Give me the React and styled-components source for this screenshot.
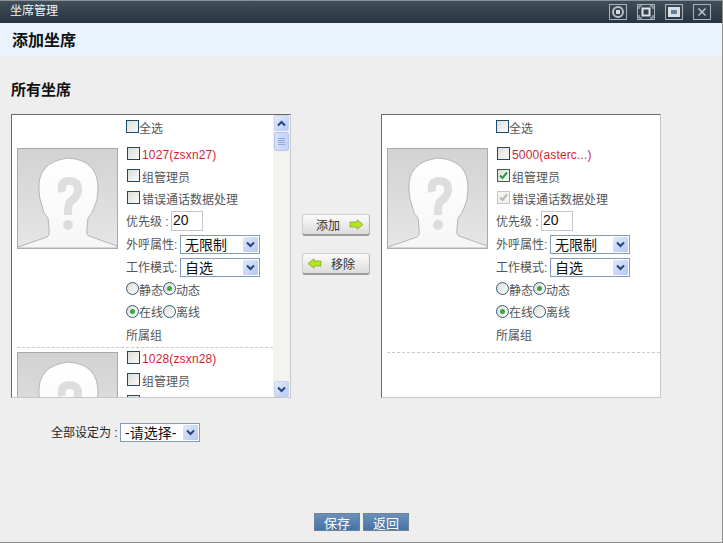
import React from 'react';
import styled, { createGlobalStyle } from 'styled-components';

const Global = createGlobalStyle`
  html, body { margin: 0; padding: 0; background: #eeeeee; }
  body { font-family: "Liberation Sans", "Noto Sans CJK SC", sans-serif; font-size: 12px; color: #555; }
`;

const Page = styled.div`
  width: 723px; height: 543px; box-sizing: border-box; display: flex; flex-direction: column;
  background: #eeeeee; border-right: 1px solid #8d8d8d; border-bottom: 1px solid #8d8d8d; overflow: hidden;
`;
const TitleBar = styled.div`
  height: 23px; flex: none; box-sizing: border-box; display: flex; align-items: center; justify-content: space-between;
  padding: 0 11px 0 10px; color: #f2f5f7; font-size: 12px; border-top: 1px solid #8b9297;
  background: linear-gradient(#3f4e58, #28353e);
`;
const TitleText = styled.span`padding-bottom: 5px;`;
const WinIcons = styled.div`display: flex; gap: 10px;`;
const WinBtn = styled.svg`width: 18px; height: 16px; display: block; border: 1px solid #a6b3bc; box-sizing: border-box;`;
const SubHeader = styled.div`
  height: 33px; flex: none; box-sizing: border-box; display: flex; align-items: center; padding: 0 0 2px 12px;
  background: #e8f3fe; color: #111; font-size: 16px; font-weight: 700;
`;
const Content = styled.div`flex: 1; display: flex; flex-direction: column; padding: 0 0 10px 11px; min-height: 0;`;
const SectionTitle = styled.div`
  height: 22px; margin-top: 21px; display: flex; align-items: center; color: #111; font-size: 15px; font-weight: 700;
`;
const Columns = styled.div`display: flex; margin-top: 15px; height: 284px;`;
const Panel = styled.div`
  width: 280px; height: 284px; box-sizing: border-box; background: #fff; display: flex; flex: none;
  border-top: 1px solid #6a6a6a; border-left: 1px solid #6a6a6a; border-right: 1px solid #c8c8c8; border-bottom: 1px solid #c8c8c8;
`;
const List = styled.div`flex: 1; min-width: 0; overflow: hidden;`;
const SelectAll = styled.div`
  height: 22px; box-sizing: border-box; padding-bottom: 2px; margin: 2px 0 5px 114px; display: flex; align-items: center;
`;
const Card = styled.div`
  margin-left: 5px; display: flex; padding-bottom: ${p => p.$pad}px; border-bottom: 1px dashed #c9c9c9;
`;
const Photo = styled.svg`width: 101px; height: 101px; margin-top: 4px; flex: none; display: block;`;
const Fields = styled.div`margin-left: 8px; display: flex; flex-direction: column; flex: 1; white-space: nowrap;`;
const Row = styled.div`height: ${p => p.$h}px; box-sizing: border-box; padding-bottom: 2px; display: flex; align-items: center;`;
const CheckRow = styled(Row)`padding-left: 1px;`;
const FieldLabel = styled.span`width: 54px; flex: none;`;
const ShortLabel = styled.span`width: 45px; flex: none;`;
const Name = styled.span`color: #cf1f34; margin: 2px 0 0 2px; letter-spacing: .15px;`;
const Lab = styled.span`margin-left: 2px;`;
const NumInput = styled.div`
  width: 32px; height: 20px; box-sizing: border-box; border: 1px solid #c6c6c6; background: #fff; color: #111;
  font-size: 14px; line-height: 17px; padding-left: 1px; margin-top: 1px;
`;
const Box = styled.span`
  width: 13px; height: 13px; flex: none; box-sizing: border-box; display: inline-block; position: relative; margin-bottom: 1px;
  border: 1px solid ${p => (p.$disabled ? '#c6c6c2' : p.$dotted ? '#3e5f42' : '#1d4a6b')};
  background: ${p => p.$disabled ? '#f2f2ee' : 'linear-gradient(135deg, #dcdcd7, #fafaf8)'};
  svg { position: absolute; left: 1px; top: 1px; width: 9px; height: 9px; display: block; }
`;
const Radio = styled.span`
  width: 13px; height: 13px; flex: none; box-sizing: border-box; display: inline-flex; align-items: center; justify-content: center; margin-bottom: 1px;
  border: 1px solid #2f5a7c; border-radius: 50%; background: linear-gradient(135deg, #dcdcd7, #fff);
  &::after { content: ""; width: 5px; height: 5px; border-radius: 50%; background: ${p => p.$on ? '#3aa840' : 'transparent'}; }
`;
const SelectBox = styled.div`
  width: ${p => p.$w}px; height: 19px; box-sizing: border-box; border: 1px solid #7f9db9; background: #fff; flex: none; margin-top: 2px;
  display: flex; align-items: center; justify-content: space-between; padding: 0 1px 0 4px; color: #111; font-size: 14px;
  span:first-child { line-height: 15px; height: 15px; margin-top: 1px; }
`;
const Arrow = styled.span`
  width: 15px; height: 15px; display: flex; align-items: center; justify-content: center; border-radius: 1px;
  background: linear-gradient(135deg, #dfe8fb, #b5c8f3);
  svg { width: 9px; height: 7px; display: block; }
`;
const Scrollbar = styled.div`
  width: 17px; flex: none; background: #f4f4ef; display: flex; flex-direction: column; justify-content: space-between;
`;
const ScrollTop = styled.div`display: flex; flex-direction: column; gap: 1px;`;
const ScrollBtn = styled.div`
  height: 16px; box-sizing: border-box; margin: 0 0 0 1px; width: 15px; border: 1px solid #c5d3f0; border-radius: 2px;
  background: linear-gradient(135deg, #e4ecfd, #b6caf5); display: flex; align-items: center; justify-content: center;
  svg { width: 9px; height: 7px; display: block; }
`;
const Thumb = styled.div`
  height: 19px; box-sizing: border-box; margin-left: 1px; width: 15px; border: 1px solid #b5c6ec; border-radius: 2px;
  background: linear-gradient(90deg, #d5e0fb, #c3d3f7); display: flex; flex-direction: column; gap: 1px; align-items: center; justify-content: center;
  i { display: block; width: 7px; height: 1px; background: #8fa5dc; }
`;
const Middle = styled.div`width: 90px; flex: none; display: flex; flex-direction: column; align-items: center; padding-top: 100px; gap: 17px;`;
const MoveBtn = styled.div`
  width: 68px; height: 22px; box-sizing: border-box; border-radius: 3px; border: 1px solid #d0d0d0; border-bottom: 2px solid #9b9b9b;
  border-right-color: #b5b5b5; background: linear-gradient(#fbfbfb, #dcdcdc); color: #333; font-size: 12px;
  display: flex; align-items: center; gap: ${p => p.$gap}px; padding-left: ${p => p.$left}px;
  svg { width: 15px; height: 11px; display: block; }
`;
const BulkRow = styled.div`margin: 23px 0 0 40px; display: flex; align-items: center; color: #222; height: 21px;`;
const BulkLabel = styled.span`width: 69px; flex: none; padding-bottom: 1px;`;
const Footer = styled.div`margin-top: auto; display: flex; justify-content: center; gap: 3px; padding-left: 1px; margin-left: -11px; margin-bottom: 1px;`;
const SaveBtn = styled.div`
  width: 46px; height: 18px; box-sizing: border-box; border: 1px solid #6f8296; color: #fff; font-size: 13px; 
  display: flex; align-items: center; justify-content: center; background: linear-gradient(#6a91bc, #4672a5);
`;

const Chevron = ({ up }) => (
  <svg viewBox="0 0 9 7"><path d={up ? 'M1 5.5 4.5 2 8 5.5' : 'M1 1.5 4.5 5 8 1.5'} fill="none" stroke="#27447a" strokeWidth="2" /></svg>
);
const Drop = () => <Arrow><Chevron /></Arrow>;
const Select = ({ w, children }) => <SelectBox $w={w}><span>{children}</span><Drop /></SelectBox>;

const Avatar = () => (
  <Photo viewBox="0 0 101 101">
    <defs>
      <linearGradient id="bg" x1="0" y1="0" x2="0" y2="1"><stop offset="0" stopColor="#d2d2d2" /><stop offset="1" stopColor="#e6e6e6" /></linearGradient>
      <linearGradient id="fg" x1="0" y1="0" x2="0" y2="1"><stop offset="0" stopColor="#ffffff" /><stop offset="1" stopColor="#f6f6f6" /></linearGradient>
    </defs>
    <rect x=".5" y=".5" width="100" height="100" fill="url(#bg)" stroke="#a9a9a9" />
    <path d="M1 99 30 89 Q33 87 32 80 L31 70 Q26 66 25 58 Q22 50 22 42 Q20 14 51 10 Q82 12 81 42 Q81 52 77 60 Q75 66 71 70 L70 80 Q69 87 72 88 L100 98 V100 H1Z" fill="url(#fg)" stroke="#b5b5b5" strokeWidth="1" />
    <path d="M45 44 Q43 33 52 33 Q62 33 61 43 Q60 49 53 54 Q51 57 51 67" fill="none" stroke="#dedede" strokeWidth="8" />
    <circle cx="51" cy="77" r="5" fill="#dcdcdc" />
  </Photo>
);

const Tick = ({ color }) => <svg viewBox="0 0 9 9"><path d="M1 4.5 3.5 7 8 1.5" fill="none" stroke={color} strokeWidth="2" /></svg>;

const Agent = ({ name, admin, errDisabled, pad, partial }) => (
  <Card $pad={pad}>
    <Avatar />
    <Fields>
      <CheckRow $h={22}><Box /><Name>{name}</Name></CheckRow>
      <CheckRow $h={22}><Box $dotted={admin}>{admin && <Tick color="#2f9a3c" />}</Box><Lab>组管理员</Lab></CheckRow>
      <CheckRow $h={22}><Box $disabled={errDisabled}>{errDisabled && <Tick color="#b8b8b4" />}</Box>{!partial && <Lab>错误通话数据处理</Lab>}</CheckRow>
      {!partial && <>
        <Row $h={23}><ShortLabel>优先级 :</ShortLabel><NumInput>20</NumInput></Row>
        <Row $h={23}><FieldLabel>外呼属性:</FieldLabel><Select w={80}>无限制</Select></Row>
        <Row $h={23}><FieldLabel>工作模式:</FieldLabel><Select w={80}>自选</Select></Row>
        <Row $h={22}><Radio />静态<Radio $on />动态</Row>
        <Row $h={23}><Radio $on />在线<Radio />离线</Row>
        <Row $h={23}>所属组</Row>
      </>}
    </Fields>
  </Card>
);

const WinIcon = ({ children }) => <WinBtn viewBox="0 0 16 14">{children}</WinBtn>;
const GreenArrow = ({ left }) => (
  <svg viewBox="0 0 15 11">
    <path d={left ? 'M1 5.5 7 .8V3H14V8H7V10.2Z' : 'M14 5.5 8 .8V3H1V8H8V10.2Z'} fill="#b4e61e" stroke="#8aa336" strokeWidth=".8" />
  </svg>
);

export default function App() {
  return (
    <Page>
      <Global />
      <TitleBar>
        <TitleText>坐席管理</TitleText>
        <WinIcons>
          <WinIcon><circle cx="8" cy="7" r="5" fill="none" stroke="#b9c1c6" strokeWidth="2" /><rect x="6" y="5" width="4" height="4" fill="#d6dbde" /></WinIcon>
          <WinIcon><rect x="4.5" y="3.5" width="7" height="7" fill="none" stroke="#dfe4e7" strokeWidth="2" /><path d="M1 4V1H4M12 1H15V4M15 10V13H12M4 13H1V10" fill="none" stroke="#cfd6da" /></WinIcon>
          <WinIcon><rect x="2" y="2" width="12" height="10" fill="#d9dfe3" /><rect x="5" y="5" width="6" height="4" fill="#5f7f9a" /></WinIcon>
          <WinIcon><path d="M4.5 3.5 11.5 10.5M11.5 3.5 4.5 10.5" stroke="#c6ced3" strokeWidth="1.4" /></WinIcon>
        </WinIcons>
      </TitleBar>
      <SubHeader>添加坐席</SubHeader>
      <Content>
        <SectionTitle>所有坐席</SectionTitle>
        <Columns>
          <Panel>
            <List>
              <SelectAll><Box />全选</SelectAll>
              <Agent name="1027(zsxn27)" pad={0} />
              <Agent name="1028(zsxn28)" pad={0} partial />
            </List>
            <Scrollbar>
              <ScrollTop>
                <ScrollBtn><Chevron up /></ScrollBtn>
                <Thumb><i /><i /><i /><i /></Thumb>
              </ScrollTop>
              <ScrollBtn><Chevron /></ScrollBtn>
            </Scrollbar>
          </Panel>
          <Middle>
            <MoveBtn $gap={9} $left={13}>添加<GreenArrow /></MoveBtn>
            <MoveBtn $gap={9} $left={4}><GreenArrow left />移除</MoveBtn>
          </Middle>
          <Panel>
            <List>
              <SelectAll><Box />全选</SelectAll>
              <Agent name="5000(asterc...)" admin errDisabled pad={5} />
            </List>
          </Panel>
        </Columns>
        <BulkRow><BulkLabel>全部设定为 :</BulkLabel><Select w={80}>-请选择-</Select></BulkRow>
        <Footer>
          <SaveBtn>保存</SaveBtn>
          <SaveBtn>返回</SaveBtn>
        </Footer>
      </Content>
    </Page>
  );
}
